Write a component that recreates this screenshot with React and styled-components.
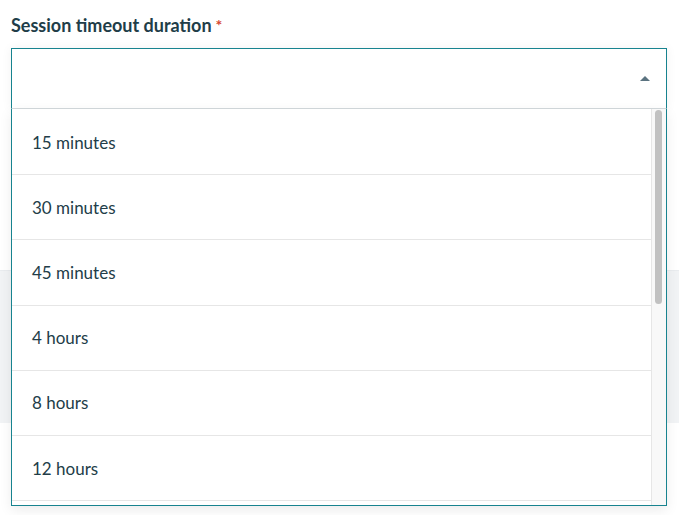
import React from "react";
import styled, { createGlobalStyle } from "styled-components";

const GlobalStyle = createGlobalStyle`
  body {
    margin: 0;
    background: #fff;
    font-family: "Lato", "Liberation Sans", sans-serif;
    color: #243f4a;
  }
`;

const Page = styled.div`
  width: 679px;
  height: 515px;
  overflow: hidden;
`;

const Field = styled.div`
  padding: 14px 12px 0 11px;
`;

const Label = styled.label`
  display: block;
  font-size: 18px;
  font-weight: 700;
  color: #213d48;
  line-height: 22px;
  margin-bottom: 12px;
  span {
    color: #d6452f;
    margin-left: 4px;
    font-size: 16px;
    vertical-align: top;
  }
`;

const SelectWrap = styled.div`
  position: relative;
`;

const Control = styled.div`
  height: 59px;
  border: 1px solid #17838f;
  border-bottom: 1px solid #d3d9dc;
  background: #fff;
  display: flex;
  align-items: center;
  justify-content: flex-end;
  padding-right: 16px;
  box-shadow: 0 0 10px rgba(0, 0, 0, 0.06);
`;

const Caret = styled.div`
  width: 0;
  height: 0;
  border-left: 5px solid transparent;
  border-right: 5px solid transparent;
  border-bottom: 5px solid #5b7380;
`;

const Menu = styled.div`
  position: absolute;
  top: 100%;
  left: 0;
  right: 0;
  height: 396px;
  display: flex;
  background: #fff;
  border: 1px solid #17838f;
  border-top: none;
  box-shadow: 0 4px 12px rgba(0, 0, 0, 0.08);
  z-index: 2;
`;

const List = styled.ul`
  flex: 1;
  margin: 0;
  padding: 1px 0 0;
  list-style: none;
  overflow: hidden;
`;

const Option = styled.li`
  box-sizing: border-box;
  height: 65.2px;
  border-bottom: 1px solid #e6e6e6;
  display: flex;
  align-items: center;
  padding-left: 20px;
  font-size: 17px;
  color: #223d48;
`;

const Track = styled.div`
  width: 14px;
  flex-shrink: 0;
  background: #f8f8f8;
  border-left: 1px solid #e6e6e6;
`;

const Thumb = styled.div`
  margin: 1px 4px 0 3px;
  height: 194px;
  border-radius: 4px;
  background: #c1c1c1;
`;

const Backdrop = styled.div`
  margin-top: 161px;
  height: 152px;
  background: #f1f3f5;
  border-top: 1px solid #e9ecef;
`;

const options = [
  "15 minutes",
  "30 minutes",
  "45 minutes",
  "4 hours",
  "8 hours",
  "12 hours",
];

export default function App() {
  return (
    <Page>
      <GlobalStyle />
      <Field>
        <Label>
          Session timeout duration<span>*</span>
        </Label>
        <SelectWrap>
          <Control>
            <Caret />
          </Control>
          <Menu>
            <List>
              {options.map((o) => (
                <Option key={o}>{o}</Option>
              ))}
            </List>
            <Track>
              <Thumb />
            </Track>
          </Menu>
        </SelectWrap>
      </Field>
      <Backdrop />
    </Page>
  );
}
